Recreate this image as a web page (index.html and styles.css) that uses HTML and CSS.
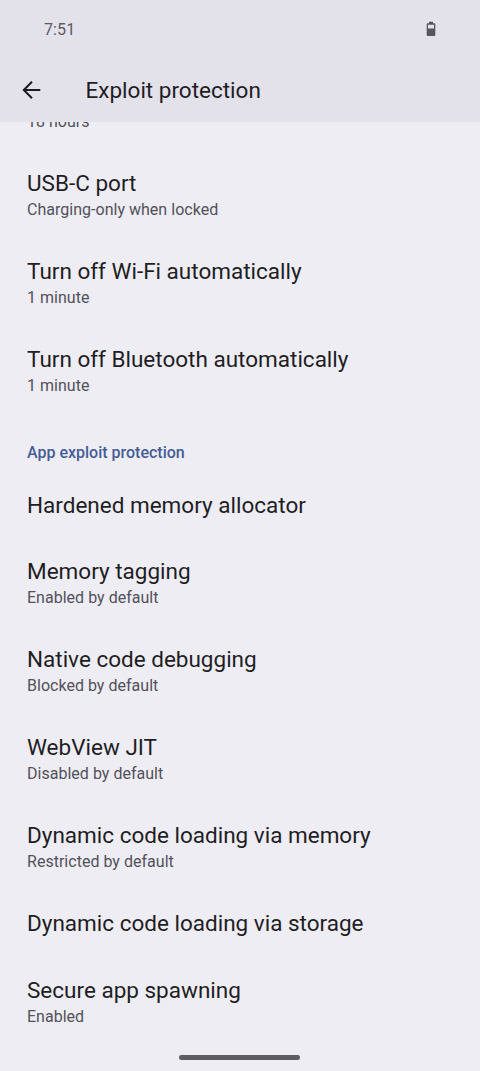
FILE: index.html
```html
<!DOCTYPE html>
<html lang="en">
<head>
<meta charset="utf-8">
<title>Exploit protection</title>
<link rel="stylesheet" href="styles.css">
</head>
<body>
<div class="screen">
  <header class="top">
    <div class="status">
      <span class="clock">7:51</span>
      <svg class="battery" width="10" height="16" viewBox="0 0 10 16"><path fill="#56545d" fill-rule="evenodd" d="M3 .7h4v1.600h1.300Q9.300 2.300 9.300 3.300V14Q9.300 15 8.300 15H1.700Q.7 15 .7 14V3.300Q.7 2.300 1.700 2.300H3ZM2 3.800V7.500H8V3.800Z"/></svg>
    </div>
    <div class="bar">
      <svg class="back" width="20" height="20" viewBox="0 0 20 20"><path fill="none" stroke="#1b1b21" stroke-width="2" d="M18.300 10H2.500M10 1.800L1.800 10L10 18.200"/></svg>
      <h1 class="heading">Exploit protection</h1>
    </div>
  </header>
  <main class="list">
    <div class="cut"><p class="sub">18 hours</p></div>
    <div class="item"><p class="title">USB-C port</p><p class="sub">Charging-only when locked</p></div>
    <div class="item"><p class="title">Turn off Wi-Fi automatically</p><p class="sub">1 minute</p></div>
    <div class="item"><p class="title">Turn off Bluetooth automatically</p><p class="sub">1 minute</p></div>
    <h2 class="section">App exploit protection</h2>
    <div class="item single"><p class="title">Hardened memory allocator</p></div>
    <div class="item"><p class="title">Memory tagging</p><p class="sub">Enabled by default</p></div>
    <div class="item"><p class="title">Native code debugging</p><p class="sub">Blocked by default</p></div>
    <div class="item"><p class="title">WebView JIT</p><p class="sub">Disabled by default</p></div>
    <div class="item"><p class="title">Dynamic code loading via memory</p><p class="sub">Restricted by default</p></div>
    <div class="item single last-single"><p class="title">Dynamic code loading via storage</p></div>
    <div class="item"><p class="title">Secure app spawning</p><p class="sub">Enabled</p></div>
  </main>
  <footer class="nav"><div class="handle"></div></footer>
</div>
</body>
</html>
```
FILE: styles.css
```css
* { box-sizing: border-box; margin: 0; padding: 0; }
body { background: #eeedf3; color: #1f1e25; font-family: Roboto, sans-serif; }
.screen { width: 480px; height: 1071px; overflow: hidden; display: flex; flex-direction: column; }
.top { height: 122px; flex: none; background: #e3e1ea; }
.status { height: 58px; padding: 0 44px; display: flex; align-items: center; justify-content: space-between; }
.clock { font-size: 16px; color: #5c5b62; letter-spacing: 0.1px; }
.bar { height: 64px; padding-left: 22px; display: flex; align-items: center; }
.heading { margin-left: 43.500px; font-size: 22.500px; line-height: 30px; font-weight: 400; }
.list { flex: 1; overflow: hidden; }
.cut { height: 28px; padding-left: 27px; overflow: hidden; }
.cut .sub { margin-top: -11px; }
.item { height: 88px; padding: 18px 27px 0; }
.single { height: 66px; }
.last-single { height: 67px; }
.title { font-size: 22.500px; line-height: 30px; white-space: nowrap; }
.title + .sub { margin-top: 1px; }
.sub { font-size: 16px; line-height: 22px; color: #52515b; letter-spacing: 0.02px; white-space: nowrap; }
.section { height: 58px; padding: 28px 27px 0; font-size: 16px; line-height: 22px; font-weight: 500; color: #455c96; }
.nav { height: 28px; flex: none; display: flex; justify-content: center; padding: 12px 1px 0 0; }
.handle { width: 121px; height: 4.500px; border-radius: 2.250px; background: #5e5d63; }
```
